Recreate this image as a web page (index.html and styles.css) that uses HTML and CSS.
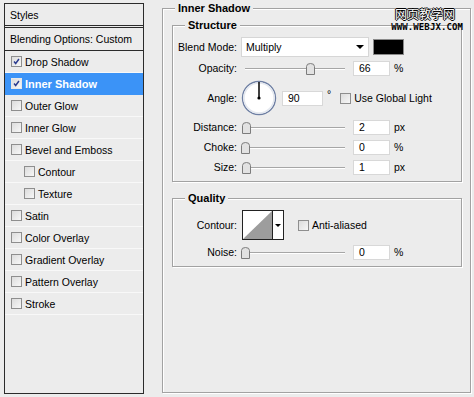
FILE: index.html
```html
<!DOCTYPE html>
<html lang="en">
<head>
    <meta charset="UTF-8">
    <meta name="viewport" content="width=device-width, initial-scale=1.0">
    <title>Layer Style - Inner Shadow</title>
    <link rel="stylesheet" href="styles.css">
</head>
<body>
    <div class="window">
        <!-- Styles list on the left -->
        <div class="styles-list">
            <div class="list-head">Styles</div>
            <div class="list-blend">Blending Options: Custom</div>
            <div class="list-item"><span class="check on"><svg viewBox="0 0 11 11"><path d="M2.5 5.5 L4.5 8 L8.5 2.5"/></svg></span>Drop Shadow</div>
            <div class="list-item active"><span class="check on"><svg viewBox="0 0 11 11"><path d="M2.5 5.5 L4.5 8 L8.5 2.5"/></svg></span>Inner Shadow</div>
            <div class="list-item"><span class="check"></span>Outer Glow</div>
            <div class="list-item"><span class="check"></span>Inner Glow</div>
            <div class="list-item"><span class="check"></span>Bevel and Emboss</div>
            <div class="list-item sub"><span class="check"></span>Contour</div>
            <div class="list-item sub"><span class="check"></span>Texture</div>
            <div class="list-item"><span class="check"></span>Satin</div>
            <div class="list-item"><span class="check"></span>Color Overlay</div>
            <div class="list-item"><span class="check"></span>Gradient Overlay</div>
            <div class="list-item"><span class="check"></span>Pattern Overlay</div>
            <div class="list-item"><span class="check"></span>Stroke</div>
        </div>

        <!-- Inner Shadow settings -->
        <fieldset class="group outer">
            <legend>Inner Shadow</legend>

            <fieldset class="group">
                <legend>Structure</legend>

                <div class="row row-blend">
                    <span class="lbl">Blend Mode:</span>
                    <div class="select">Multiply<span class="arrow"></span></div>
                    <div class="swatch"></div>
                </div>

                <div class="row">
                    <span class="lbl">Opacity:</span>
                    <div class="slider">
                        <div class="track"></div>
                        <svg class="thumb" style="left: 65px" viewBox="0 0 9 12"><path d="M0.5 3.5 Q0.5 0.5 4.5 0.5 Q8.5 0.5 8.5 3.5 V11.5 H0.5 Z"/></svg>
                    </div>
                    <div class="field">66</div>
                    <span class="unit">%</span>
                </div>

                <div class="row row-angle">
                    <span class="lbl">Angle:</span>
                    <svg class="dial" viewBox="0 0 36 36">
                        <circle class="dial-ring" cx="18" cy="18" r="16.5"/>
                        <circle class="dial-inner" cx="18" cy="18" r="15"/>
                        <line x1="18" y1="18" x2="18" y2="2"/>
                        <circle class="dial-dot" cx="18" cy="18" r="1.6"/>
                    </svg>
                    <div class="field field-angle">90</div>
                    <span class="unit deg">°</span>
                    <span class="check"></span>
                    <span class="check-text">Use Global Light</span>
                </div>

                <div class="row">
                    <span class="lbl">Distance:</span>
                    <div class="slider">
                        <div class="track"></div>
                        <svg class="thumb" style="left: 1px" viewBox="0 0 9 12"><path d="M0.5 3.5 Q0.5 0.5 4.5 0.5 Q8.5 0.5 8.5 3.5 V11.5 H0.5 Z"/></svg>
                    </div>
                    <div class="field">2</div>
                    <span class="unit">px</span>
                </div>

                <div class="row">
                    <span class="lbl">Choke:</span>
                    <div class="slider">
                        <div class="track"></div>
                        <svg class="thumb" style="left: 0px" viewBox="0 0 9 12"><path d="M0.5 3.5 Q0.5 0.5 4.5 0.5 Q8.5 0.5 8.5 3.5 V11.5 H0.5 Z"/></svg>
                    </div>
                    <div class="field">0</div>
                    <span class="unit">%</span>
                </div>

                <div class="row">
                    <span class="lbl">Size:</span>
                    <div class="slider">
                        <div class="track"></div>
                        <svg class="thumb" style="left: 1px" viewBox="0 0 9 12"><path d="M0.5 3.5 Q0.5 0.5 4.5 0.5 Q8.5 0.5 8.5 3.5 V11.5 H0.5 Z"/></svg>
                    </div>
                    <div class="field">1</div>
                    <span class="unit">px</span>
                </div>
            </fieldset>

            <fieldset class="group quality">
                <legend>Quality</legend>

                <div class="row row-contour">
                    <span class="lbl">Contour:</span>
                    <div class="contour">
                        <svg class="contour-preview" viewBox="0 0 29 28"><polygon points="0,28 29,0 29,28"/></svg>
                        <span class="contour-drop"><span class="arrow"></span></span>
                    </div>
                    <span class="check"></span>
                    <span class="check-text">Anti-aliased</span>
                </div>

                <div class="row">
                    <span class="lbl">Noise:</span>
                    <div class="slider">
                        <div class="track"></div>
                        <svg class="thumb" style="left: 0px" viewBox="0 0 9 12"><path d="M0.5 3.5 Q0.5 0.5 4.5 0.5 Q8.5 0.5 8.5 3.5 V11.5 H0.5 Z"/></svg>
                    </div>
                    <div class="field">0</div>
                    <span class="unit">%</span>
                </div>
            </fieldset>
        </fieldset>
    </div>

    <div class="watermark">
        <div class="wm-cn">网页教学网</div>
        <div class="wm-url">WWW.WEBJX.COM</div>
    </div>
</body>
</html>
```

FILE: styles.css
```css
body {
    margin: 0;
    width: 474px;
    height: 397px;
    overflow: hidden;
    position: relative;
    background: #ececec;
    color: #000;
    font-family: 'Liberation Sans', Arial, sans-serif;
    font-size: 10.5px;
}

.window {
    display: flex;
    align-items: flex-start;
    gap: 18px;
    padding: 3px 0 0 4px;
}

/* left list */

.styles-list {
    box-sizing: border-box;
    width: 140px;
    height: 391px;
    border: 1px solid #2b2b2b;
}

.list-head {
    height: 21px;
    line-height: 22px;
    padding-left: 5px;
    border-bottom: 3px double #2b2b2b;
}

.list-blend {
    height: 22px;
    line-height: 23px;
    padding-left: 5px;
    border-bottom: 1px solid #2b2b2b;
}

.list-item {
    display: flex;
    align-items: center;
    gap: 3px;
    height: 21px;
    padding-left: 6px;
    border-bottom: 1px solid #f8f8f8;
}

.list-item.sub {
    padding-left: 19px;
}

.list-item.active {
    background: #3b93f7;
    color: #fff;
    font-weight: bold;
    font-size: 11px;
    border-bottom-color: #3b93f7;
}

.check {
    box-sizing: border-box;
    width: 11px;
    height: 11px;
    flex: none;
    border: 1px solid #8e8e8e;
    background: linear-gradient(135deg, #dcdcdc, #f7f7f7);
}

.check svg {
    display: block;
    width: 9px;
    height: 9px;
    fill: none;
    stroke: #2a3b8f;
    stroke-width: 1.8;
}

.active .check {
    border-color: #e8e8e8;
}

/* group boxes */

.group {
    margin: 0;
    border: 1px solid #a2a2a2;
    box-shadow: inset 1px 1px 0 #fff, 1px 1px 0 #fff;
}

.group legend {
    font-weight: bold;
    font-size: 11px;
    line-height: 13px;
    padding: 0 3px;
    margin-left: 12px;
    background: #ececec;
}

.outer {
    box-sizing: border-box;
    width: 309px;
    height: 391px;
    margin-top: -1px;
    padding: 4px 8px 0 9px;
}

.outer > legend {
    margin-left: 3px;
}

.outer > .group {
    box-sizing: border-box;
    width: 290px;
    padding: 5px 0 6px 0;
}

.quality {
    margin-top: 10px;
}

/* rows */

.row {
    display: flex;
    align-items: center;
    height: 16px;
}

.row + .row {
    margin-top: 4px;
}

.row-blend {
    height: 20px;
}

.row-blend + .row {
    margin-top: 3px;
}

.row-angle {
    height: 36px;
}

.row-angle + .row {
    margin-top: 3px;
}

.row-contour {
    height: 30px;
}

.lbl {
    width: 64px;
    flex: none;
    text-align: right;
    margin-right: 4px;
}

.select {
    box-sizing: border-box;
    display: flex;
    align-items: center;
    justify-content: space-between;
    width: 128px;
    height: 20px;
    padding: 0 4px;
    background: #fff;
    border: 1px solid #d6d6d6;
}

.arrow {
    width: 0;
    height: 0;
    border-left: 4px solid transparent;
    border-right: 4px solid transparent;
    border-top: 4px solid #000;
}

.swatch {
    box-sizing: border-box;
    width: 31px;
    height: 16px;
    margin-left: 4px;
    background: #000;
    border: 1px solid #8a8a8a;
}

.slider {
    position: relative;
    width: 104px;
    height: 16px;
    flex: none;
}

.track {
    margin: 8px 0 0 4px;
    border-top: 1px solid #a6a6a6;
    border-bottom: 1px solid #fff;
}

.thumb {
    position: absolute;
    top: 3px;
    width: 9px;
    height: 12px;
    fill: #e2e2e2;
    stroke: #7c7c7c;
    stroke-width: 1;
}

.field {
    box-sizing: border-box;
    width: 37px;
    height: 15px;
    line-height: 13px;
    margin-left: 8px;
    padding-left: 5px;
    background: #fff;
    border: 1px solid #d8d8d8;
}

.unit {
    margin-left: 4px;
}

.field-angle {
    width: 41px;
    margin-left: 5px;
}

.deg {
    align-self: flex-start;
    margin-top: 8px;
    margin-right: 9px;
}

.check-text {
    margin-left: 3px;
}

/* angle dial */

.dial {
    width: 36px;
    height: 36px;
    flex: none;
}

.dial-ring {
    fill: #fff;
    stroke: #6e7fa3;
    stroke-width: 1.4;
}

.dial-inner {
    fill: none;
    stroke: #e4e8ef;
    stroke-width: 1.5;
}

.dial line {
    stroke: #000;
    stroke-width: 1.5;
}

.dial-dot {
    fill: #000;
}

/* contour picker */

.contour {
    display: flex;
    box-sizing: border-box;
    width: 42px;
    height: 30px;
    margin-left: 1px;
    margin-right: 14px;
    border: 1px solid #222;
    background: #fff;
}

.contour-preview {
    width: 29px;
    height: 28px;
    fill: #9d9d9d;
    border-right: 1px solid #222;
}

.contour-drop {
    flex: 1;
    display: flex;
    align-items: center;
    justify-content: center;
}

.contour-drop .arrow {
    border-left-width: 3px;
    border-right-width: 3px;
    border-top-width: 3px;
}

/* watermark over the corner */

.watermark {
    position: absolute;
    top: 6px;
    right: 11px;
    text-align: right;
}

.wm-cn {
    font-family: 'Noto Sans CJK SC', sans-serif;
    font-size: 12px;
    line-height: 16px;
    color: #fff;
    padding-right: 8px;
    text-shadow: -1px 0 #000, 1px 0 #000, 0 -1px #000, 0 1px #000;
}

.wm-url {
    margin-top: 1px;
    font-family: 'DejaVu Sans Mono', monospace;
    font-weight: bold;
    font-size: 9px;
    line-height: 9px;
    letter-spacing: 0.1px;
}
```
